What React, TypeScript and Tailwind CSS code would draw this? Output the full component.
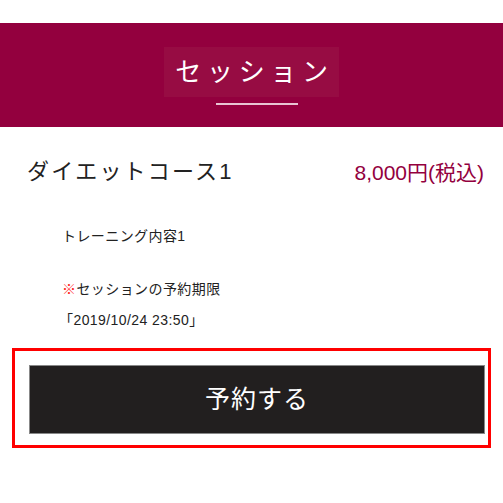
import React from 'react';

const font = { fontFamily: '"Liberation Sans", "Noto Sans CJK JP", sans-serif' };

export default function App() {
  return (
    <div className="w-[503px] h-[503px] bg-white overflow-hidden" style={font}>
      <div className="h-[23px]" />
      <section className="h-[104px] bg-[#93003e] flex flex-col items-center pt-[24px]">
        <div className="w-[175px] h-[50px] bg-[#970c43] flex items-center justify-center">
          <h1 className="text-white text-[26px] tracking-[0.22em] pl-[6px] leading-none">セッション</h1>
        </div>
        <div className="w-[82px] h-[2px] bg-[#e8c4d2] mt-[6px] ml-[11px]" />
      </section>

      <div className="flex items-center justify-between pl-[27px] pr-[19px] h-[90px]">
        <h2 className="text-[22px] text-[#222] leading-none tracking-[0.1em]">ダイエットコース1</h2>
        <span className="text-[21px] text-[#93003e] leading-none">8,000円(税込)</span>
      </div>

      <div className="pl-[62px] pt-[10px] text-[14px] text-[#222] tracking-[0.03em]">
        <p className="h-[18px] leading-[18px]">トレーニング内容1</p>
        <p className="h-[18px] leading-[18px] mt-[35px]"><span className="text-[#ff1a1a]">※</span>セッションの予約期限</p>
        <p className="h-[18px] leading-[18px] mt-[13px] -ml-[3px]">「2019/10/24 23:50」</p>
      </div>

      <div className="mx-[12px] mt-[19px] h-[100px] border-[3px] border-[#ff0000] px-[14px] pt-[14px]">
        <button className="w-[456px] h-[69px] bg-[#221f1f] border border-[#888] text-white text-[25px] tracking-[0.04em] flex items-center justify-center">
          予約する
        </button>
      </div>
    </div>
  );
}
